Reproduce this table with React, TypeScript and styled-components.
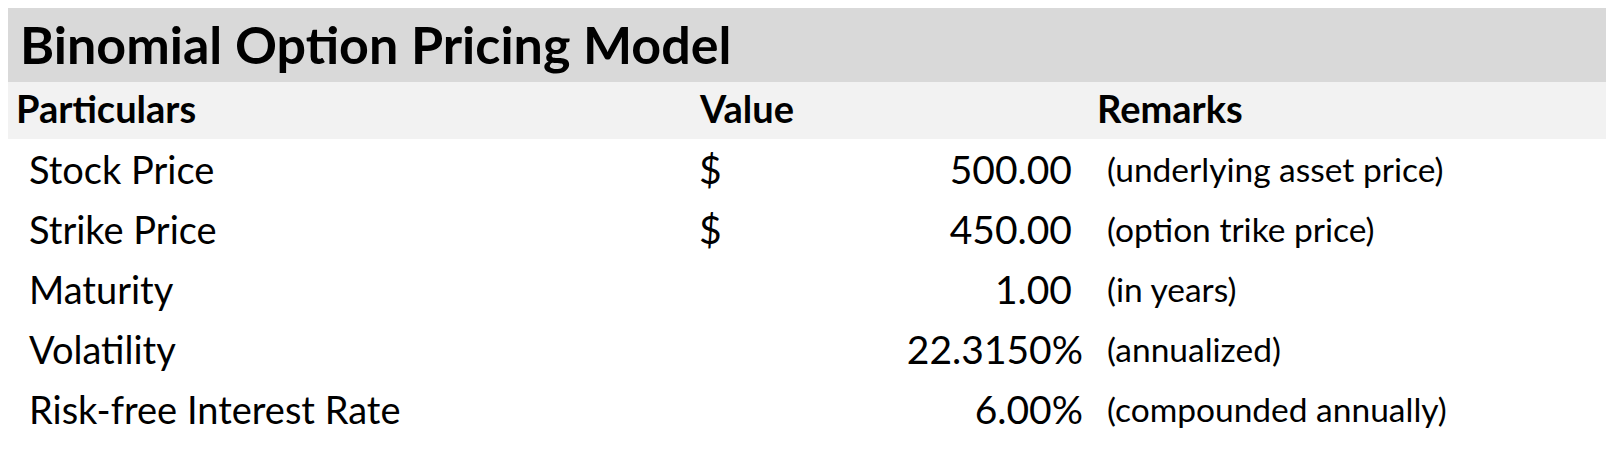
import React from "react";
import styled, { createGlobalStyle } from "styled-components";

const GlobalStyle = createGlobalStyle`
  html, body {
    margin: 0;
    padding: 0;
    background: #ffffff;
  }
  body {
    padding: 8px 0 0 8px;
    font-family: Lato, "Open Sans", "Liberation Sans", sans-serif;
    color: #000000;
  }
`;

const Sheet = styled.div`
  display: flex;
  flex-direction: column;
  width: 100%;
`;

const TitleBand = styled.div`
  height: 74px;
  background: #d9d9d9;
  padding-left: 12px;
  font-weight: 700;
  font-size: 52px;
  line-height: 72px;
  white-space: nowrap;
`;

const Grid = styled.div`
  display: grid;
  grid-template-columns: 684px 396px 1fr;
`;

const HeadCell = styled.div<{ $pad: number }>`
  height: 57px;
  box-sizing: border-box;
  background: #f2f2f2;
  padding-left: ${(p) => p.$pad}px;
  font-weight: 700;
  font-size: 38px;
  line-height: 53px;
  white-space: nowrap;
`;

const Cell = styled.div`
  height: 60px;
  box-sizing: border-box;
  padding-top: 2px;
  padding-bottom: 2px;
  font-size: 38px;
  line-height: 56px;
  white-space: nowrap;
`;

const LabelCell = styled(Cell)`
  padding-left: 21px;
`;

const ValueCell = styled(Cell)<{ $trail: number }>`
  display: flex;
  justify-content: space-between;
  padding-left: 7px;
  padding-right: ${(p) => p.$trail}px;
  font-size: 39px;
`;

const RemarkCell = styled(Cell)`
  padding-left: 19px;
  font-size: 33.5px;
`;

type Row = {
  label: string;
  currency: boolean;
  value: string;
  percent: boolean;
  remark: string;
};

const rows: Row[] = [
  { label: "Stock Price", currency: true, value: "500.00", percent: false, remark: "(underlying asset price)" },
  { label: "Strike Price", currency: true, value: "450.00", percent: false, remark: "(option trike price)" },
  { label: "Maturity", currency: false, value: "1.00", percent: false, remark: "(in years)" },
  { label: "Volatility", currency: false, value: "22.3150%", percent: true, remark: "(annualized)" },
  { label: "Risk-free Interest Rate", currency: false, value: "6.00%", percent: true, remark: "(compounded annually)" },
];

export default function App() {
  return (
    <>
      <GlobalStyle />
      <Sheet>
        <TitleBand>Binomial Option Pricing Model</TitleBand>
        <Grid>
          <HeadCell $pad={8}>Particulars</HeadCell>
          <HeadCell $pad={8}>Value</HeadCell>
          <HeadCell $pad={9}>Remarks</HeadCell>
          {rows.map((r) => (
            <React.Fragment key={r.label}>
              <LabelCell>{r.label}</LabelCell>
              <ValueCell $trail={r.percent ? 5 : 16}>
                <span>{r.currency ? "$" : ""}</span>
                <span>{r.value}</span>
              </ValueCell>
              <RemarkCell>{r.remark}</RemarkCell>
            </React.Fragment>
          ))}
        </Grid>
      </Sheet>
    </>
  );
}
